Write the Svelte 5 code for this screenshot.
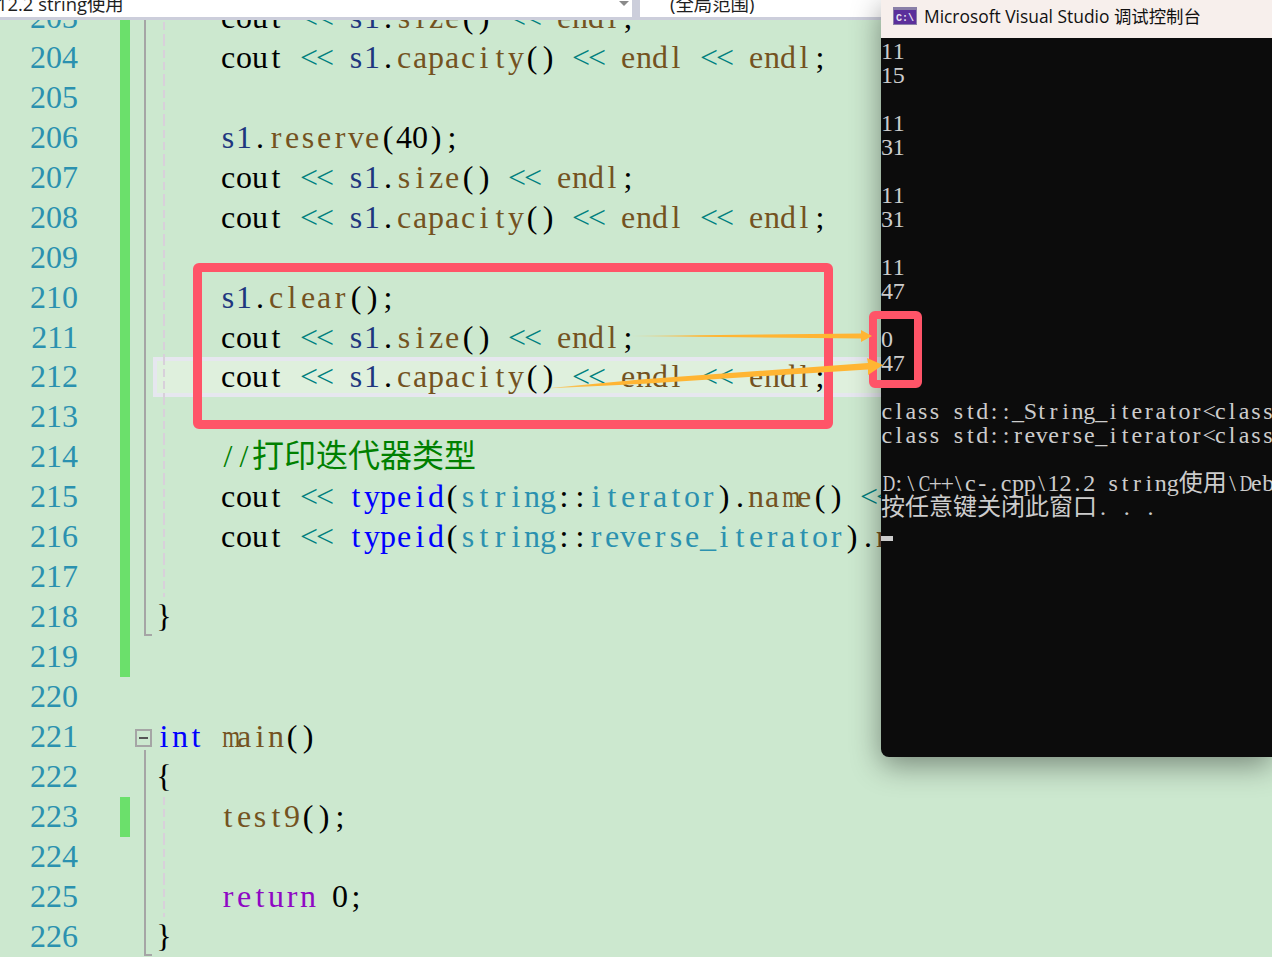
<script>
  const CJK = /([\u3000-\u9fff]+)/;
  const WIDE = /[mDCw]/;

  const kinds = {
    cout: "plain",
    s1: "var",
    endl: "fn", size: "fn", capacity: "fn", reserve: "fn", clear: "fn", name: "fn", main: "fn", test9: "fn",
    typeid: "kw", int: "kw",
    string: "type", iterator: "type", reverse_iterator: "type",
    return: "ctl",
  };

  function tokens(src) {
    if (src.trim().startsWith("//")) return [{ cls: "comment", text: src }];
    return src.split(/(\s+|<<|[A-Za-z_][A-Za-z0-9_]*)/).filter(Boolean).map((text) => ({
      cls: text === "<<" ? "op" : kinds[text] || "plain",
      text,
    }));
  }

  // mark: changed line, fold: line / end / box, guide: dashed indent line
  const rows = [
    { n: 203, src: "    cout << s1.size() << endl;", mark: 1, fold: "line", guide: 1 },
    { n: 204, src: "    cout << s1.capacity() << endl << endl;", mark: 1, fold: "line", guide: 1 },
    { n: 205, src: "", mark: 1, fold: "line", guide: 1 },
    { n: 206, src: "    s1.reserve(40);", mark: 1, fold: "line", guide: 1 },
    { n: 207, src: "    cout << s1.size() << endl;", mark: 1, fold: "line", guide: 1 },
    { n: 208, src: "    cout << s1.capacity() << endl << endl;", mark: 1, fold: "line", guide: 1 },
    { n: 209, src: "", mark: 1, fold: "line", guide: 1 },
    { n: 210, src: "    s1.clear();", mark: 1, fold: "line", guide: 1 },
    { n: 211, src: "    cout << s1.size() << endl;", mark: 1, fold: "line", guide: 1 },
    { n: 212, src: "    cout << s1.capacity() << endl << endl;", mark: 1, fold: "line", guide: 1, current: 1 },
    { n: 213, src: "", mark: 1, fold: "line", guide: 1 },
    { n: 214, src: "    //打印迭代器类型", mark: 1, fold: "line", guide: 1 },
    { n: 215, src: "    cout << typeid(string::iterator).name() << endl;", mark: 1, fold: "line", guide: 1 },
    { n: 216, src: "    cout << typeid(string::reverse_iterator).name() << endl;", mark: 1, fold: "line", guide: 1 },
    { n: 217, src: "", mark: 1, fold: "line", guide: 1 },
    { n: 218, src: "}", mark: 1, fold: "end" },
    { n: 219, src: "", mark: 1 },
    { n: 220, src: "" },
    { n: 221, src: "int main()", fold: "box" },
    { n: 222, src: "{", fold: "line" },
    { n: 223, src: "    test9();", mark: 1, fold: "line", guide: 1 },
    { n: 224, src: "", fold: "line", guide: 1 },
    { n: 225, src: "    return 0;", fold: "line", guide: 1 },
    { n: 226, src: "}", fold: "end" },
  ];

  const output = [
    "11", "15", "", "11", "31", "", "11", "31", "", "11", "47", "", "0", "47", "",
    "class std::_String_iterator<class std::_String_val<struct std::_Simple_types<char> > >",
    "class std::reverse_iterator<class std::_String_iterator<class std::_String_val<struct",
    "",
    "D:\\C++\\c-.cpp\\12.2 string使用\\Debug\\12.2 string使用.exe",
    "按任意键关闭此窗口. . .",
  ];
</script>

{#snippet mono(text)}{#each text.split(CJK) as part, i}{#if i % 2}<span class="cjk">{part}</span>{:else}{#each part as ch}<span class="ch" class:wide={WIDE.test(ch)}>{ch}</span>{/each}{/if}{/each}{/snippet}

<div class="ide">
  <div class="toolbar">
    <div class="field first">
      <span class="field-text file">12.2 string使用</span>
      <span class="caret"></span>
    </div>
    <div class="field">
      <span class="field-text scope">(全局范围)</span>
    </div>
  </div>

  <div class="editor">
    {#each rows as row}
      <div class="row" class:current={row.current}>
        <span class="num">{row.n}</span>
        <span class="mark" class:changed={row.mark}></span>
        <span class="fold {row.fold || ''}">
          {#if row.fold === "box"}<i class="box-icon"></i>{/if}
        </span>
        <span class="code" class:guide={row.guide}>{#each tokens(row.src) as t}<span class={t.cls}>{@render mono(t.text)}</span>{/each}</span>
      </div>
    {/each}
  </div>

  <div class="console">
    <div class="titlebar">
      <svg class="app-icon" width="24" height="18" viewBox="0 0 24 18">
        <rect x="0" y="0" width="24" height="18" fill="#8a7fa8" />
        <rect x="1" y="3" width="22" height="14" fill="#5b2f9b" />
        <text x="3" y="14" font-size="10" font-weight="700" font-family="Liberation Mono, monospace" fill="#e8e2f2">C:\</text>
      </svg>
      <span class="title">Microsoft Visual Studio 调试控制台</span>
    </div>
    <div class="screen">
      {#each output as line}
        <div class="out">{@render mono(line)}</div>
      {/each}
      <div class="cursor"></div>
    </div>
  </div>

  <div class="note big"></div>
  <div class="note small"></div>
  <svg class="arrows" width="1272" height="957" viewBox="0 0 1272 957">
    <defs>
      <linearGradient id="fade1" gradientUnits="userSpaceOnUse" x1="630" y1="336" x2="700" y2="336">
        <stop offset="0" stop-color="#ffb533" stop-opacity="0.4" />
        <stop offset="1" stop-color="#ffb533" />
      </linearGradient>
      <linearGradient id="fade2" gradientUnits="userSpaceOnUse" x1="545" y1="388" x2="600" y2="384">
        <stop offset="0" stop-color="#ffb533" stop-opacity="0.6" />
        <stop offset="1" stop-color="#ffb533" />
      </linearGradient>
    </defs>
    <polygon points="630,336 861,333.5 861,330 872,336 861,342 861,338.5" fill="url(#fade1)" />
    <polygon points="545,388.5 640,379.5 868,363 867,358 883,365 868,375 868,369.5 640,384" fill="url(#fade2)" />
  </svg>
</div>

<style>
  :global(body) {
    margin: 0;
    overflow: hidden;
  }
  .ide {
    position: relative;
    width: 1272px;
    height: 957px;
    overflow: hidden;
    background: #cce8cf;
    font-family: "Liberation Serif", "Noto Sans CJK SC", serif;
  }
  .toolbar {
    position: relative;
    z-index: 1;
    display: flex;
    gap: 8px;
    height: 17px;
    border-bottom: 3px solid #cccedb;
    background: #cccedb;
  }
  .field {
    position: relative;
    flex: 1;
    overflow: hidden;
    background: #fff;
    font-family: "Open Sans", "Noto Sans CJK SC", sans-serif;
    font-size: 18.4px;
    line-height: 20px;
    color: #1e1e1e;
  }
  .field.first {
    flex: 0 0 632px;
  }
  .field-text {
    display: block;
    margin-top: -6px;
    white-space: nowrap;
  }
  .file {
    margin-left: -3px;
  }
  .scope {
    margin-left: 30px;
  }
  .caret {
    position: absolute;
    top: 1px;
    right: 3px;
    border-left: 5px solid transparent;
    border-right: 5px solid transparent;
    border-top: 5px solid #8a8a8a;
  }
  .editor {
    margin-top: -22px;
  }
  .row {
    position: relative;
    display: flex;
    height: 39.95px;
    line-height: 39.95px;
    font-size: 32px;
    white-space: pre;
  }
  .row.current::before {
    content: "";
    position: absolute;
    inset: 0 0 0 153px;
    box-sizing: border-box;
    border: 4px solid #e6e7ef;
    background: #dff0dd;
  }
  .num {
    position: relative;
    width: 78px;
    text-align: right;
    color: #2b91af;
  }
  .mark {
    width: 10px;
    margin-left: 42px;
  }
  .mark.changed {
    background: #6be06b;
  }
  .fold {
    position: relative;
    width: 26px;
  }
  .fold.line::before,
  .fold.end::before {
    content: "";
    position: absolute;
    left: 14px;
    top: 0;
    bottom: 0;
    width: 2px;
    background: #a5a5a5;
  }
  .fold.end::before {
    bottom: 1px;
  }
  .fold.end::after {
    content: "";
    position: absolute;
    left: 14px;
    bottom: 1px;
    width: 8px;
    height: 2px;
    background: #a5a5a5;
  }
  .box-icon {
    position: absolute;
    left: 5px;
    top: 12px;
    box-sizing: border-box;
    width: 17px;
    height: 18px;
    border: 2px solid #a5a5a5;
  }
  .box-icon::after {
    content: "";
    position: absolute;
    left: 2px;
    top: 6px;
    width: 9px;
    height: 2px;
    background: #555;
  }
  .fold.box::after {
    content: "";
    position: absolute;
    left: 14px;
    bottom: 0;
    height: 7px;
    width: 2px;
    background: #a5a5a5;
  }
  .code {
    position: relative;
    flex: 1;
    min-width: 0;
  }
  .code.guide::before {
    content: "";
    position: absolute;
    left: 7px;
    top: 0;
    bottom: 0;
    width: 2px;
    background: repeating-linear-gradient(#d8d0da 0 8px, transparent 8px 12px);
  }
  .ch {
    display: inline-block;
    width: 16px;
    text-align: center;
  }
  .ch.wide {
    transform: scaleX(0.72);
  }
  .plain { color: #000; }
  .op { color: #008080; }
  .var { color: #1f377f; }
  .fn { color: #74531f; }
  .kw { color: #0000ff; }
  .type { color: #2b91af; }
  .ctl { color: #8f08c4; }
  .comment { color: #008000; }
  .cjk {
    line-height: 1;
  }
  .console {
    position: absolute;
    z-index: 2;
    left: 881px;
    top: 0;
    right: 0;
    height: 757px;
    display: flex;
    flex-direction: column;
    border-bottom-left-radius: 8px;
    background: #0c0c0c;
    box-shadow: 0 8px 30px rgba(0, 0, 0, 0.42);
    overflow: hidden;
  }
  .titlebar {
    flex: 0 0 38px;
    box-sizing: border-box;
    display: flex;
    align-items: center;
    gap: 7px;
    padding: 0 0 7px 12px;
    background: #f7efec;
  }
  .title {
    font-family: "Open Sans", "Noto Sans CJK SC", sans-serif;
    font-size: 17.4px;
    color: #111;
    white-space: nowrap;
  }
  .screen {
    padding-top: 1px;
    color: #ccc;
    font-size: 24px;
    line-height: 24px;
  }
  .out {
    height: 24px;
    white-space: pre;
  }
  .out .ch {
    width: 12px;
    margin-left: -0.1px;
  }
  .cursor {
    width: 12px;
    height: 5px;
    margin-top: 17px;
    background: #ccc;
  }
  .note {
    position: absolute;
    z-index: 3;
    box-sizing: border-box;
    border-style: solid;
    border-color: #ff5468;
    border-radius: 6px;
  }
  .note.big {
    left: 193px;
    top: 263px;
    width: 640px;
    height: 166px;
    border-width: 9px;
  }
  .note.small {
    left: 869px;
    top: 311px;
    width: 53px;
    height: 77px;
    border-width: 8px;
  }
  .arrows {
    position: absolute;
    z-index: 4;
    left: 0;
    top: 0;
    pointer-events: none;
  }
</style>
